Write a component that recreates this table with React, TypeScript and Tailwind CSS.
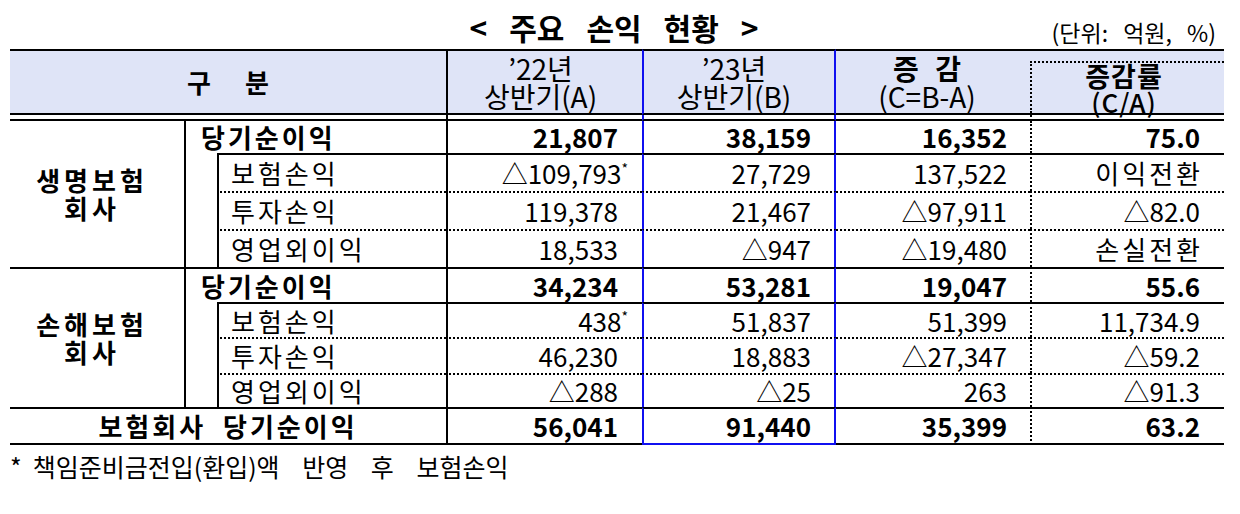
const BLUE = 'border-[#1010f0]';

type Row = [string, string, string, string, string];

const groups: { label: string[]; net: string[]; rows: Row[]; heights: number[] }[] = [
  {
    label: ['생명보험', '회사'],
    net: ['21,807', '38,159', '16,352', '75.0'],
    rows: [
      ['보험손익', '△109,793*', '27,729', '137,522', '이익전환'],
      ['투자손익', '119,378', '21,467', '△97,911', '△82.0'],
      ['영업외이익', '18,533', '△947', '△19,480', '손실전환'],
    ],
    heights: [32, 38, 38, 38],
  },
  {
    label: ['손해보험', '회사'],
    net: ['34,234', '53,281', '19,047', '55.6'],
    rows: [
      ['보험손익', '438*', '51,837', '51,399', '11,734.9'],
      ['투자손익', '46,230', '18,883', '△27,347', '△59.2'],
      ['영업외이익', '△288', '△25', '263', '△91.3'],
    ],
    heights: [35, 35, 36, 34],
  },
];

function Val({ v }: { v: string }) {
  if (v.endsWith('*')) {
    return (
      <>
        {v.slice(0, -1)}
        <span className="-mr-[10px] align-super text-[14px] leading-none">*</span>
      </>
    );
  }
  // hangul values (이익전환 / 손실전환) are set a little wider
  if (/[가-힣]/.test(v)) return <span className="tracking-[3px] -mr-[3px]">{v}</span>;
  return <>{v}</>;
}

// top: 'none' | 'solid' | 'dotted'
function NumCells({ vals, top, bold, bottom }: { vals: string[]; top: string; bold?: boolean; bottom?: boolean }) {
  const t = top === 'solid' ? 'border-t-2 border-t-black' : top === 'dotted' ? '[border-top:2px_dotted_#000]' : '';
  const b = bottom ? 'border-b-2 border-b-black' : '';
  const w = bold ? 'font-bold' : 'font-normal';
  return (
    <>
      <td className={`${t} ${b} ${w} border-l-2 border-l-black text-right pr-[24px]`}><Val v={vals[0]} /></td>
      <td className={`${t} ${w} border-x-2 ${BLUE} ${bottom ? 'border-b-2 border-b-[#1010f0]' : ''} ${top === 'solid' ? 'border-t-black' : ''} text-right pr-[23px]`}>
        <Val v={vals[1]} />
      </td>
      <td className={`${t} ${b} ${w} text-right pr-[23px]`}><Val v={vals[2]} /></td>
      <td className={`${t} ${b} ${w} [border-left:2px_dotted_#000] text-right pr-[24px]`}><Val v={vals[3]} /></td>
    </>
  );
}

export default function App() {
  return (
    <div className="w-[1240px] h-[514px] bg-white text-black font-['Noto_Sans_CJK_KR','Noto_Sans_CJK_JP',sans-serif]">
      <div className="ml-[10px] w-[1214px] h-[49px] grid grid-cols-[1fr_auto_1fr] items-end">
        <div />
        <h1 className="flex gap-[22px] text-[30px] font-bold leading-none pb-[7px] pr-[6px]">
          <span>&lt;</span>
          <span>주요</span>
          <span>손익</span>
          <span>현황</span>
          <span>&gt;</span>
        </h1>
        <div className="justify-self-end text-[23px] leading-none pb-[5px] pr-[8px] [word-spacing:10px]">(단위: 억원, %)</div>
      </div>

      <table className="ml-[10px] w-[1214px] table-fixed border-separate border-spacing-0 text-[26px] leading-none">
        <colgroup>
          <col className="w-[176px]" />
          <col className="w-[31px]" />
          <col className="w-[229px]" />
          <col className="w-[196px]" />
          <col className="w-[194px]" />
          <col className="w-[194px]" />
          <col className="w-[194px]" />
        </colgroup>
        <thead>
          <tr className="h-[66px] bg-[#dfe4f7] text-[28px] leading-[28px]">
            <th colSpan={3} className="border-y-2 border-black font-bold text-[26px]">
              <span className="pr-[34px]">구</span>분
            </th>
            <th className="border-y-2 border-l-2 border-black font-normal pr-[9px]">
              ’22년<br />상반기(A)
            </th>
            <th className={`border-y-2 border-y-black border-x-2 ${BLUE} font-normal pr-[10px]`}>
              ’23년<br />상반기(B)
            </th>
            <th className="border-y-2 border-black font-normal pr-[12px]">
              <span className="font-bold [word-spacing:10px]">증 감</span><br />(C=B-A)
            </th>
            <th className="border-y-2 border-black p-0 align-top">
              <div className="mt-[10px] h-[52px] pr-[8px] [border-top:2px_dotted_#000] [border-left:2px_dotted_#000] flex flex-col items-center justify-end text-[27px] leading-[26px]">
                <span className="font-bold tracking-[1px]">증감률</span>
                <span className="font-medium text-[26px] tracking-[1px] -mb-[2px]">(C/A)</span>
              </div>
            </th>
          </tr>
          <tr className="h-[6px]">
            <td colSpan={3} className="border-b-2 border-black" />
            <td className="border-b-2 border-l-2 border-black" />
            <td className={`border-b-2 border-b-black border-x-2 ${BLUE}`} />
            <td className="border-b-2 border-black" />
            <td className="border-b-2 border-b-black [border-left:2px_dotted_#000]" />
          </tr>
        </thead>
        <tbody>
          {groups.map((g, gi) => (
            <>
              <tr key={`n${gi}`} style={{ height: g.heights[0] }}>
                <td
                  rowSpan={4}
                  className={`border-r-2 border-black font-bold text-center pr-[10px] leading-[28px] tracking-[4px] ${gi > 0 ? 'border-t-2' : ''}`}
                >
                  {g.label[0]}
                  <br />
                  {g.label[1]}
                </td>
                <td colSpan={2} className={`font-bold pl-[15px] tracking-[3px] ${gi > 0 ? 'border-t-2 border-black' : ''}`}>
                  당기순이익
                </td>
                <NumCells vals={g.net} top={gi > 0 ? 'solid' : 'none'} bold />
              </tr>
              {g.rows.map((r, ri) => (
                <tr key={`r${gi}${ri}`} style={{ height: g.heights[ri + 1] }}>
                  {ri === 0 && <td rowSpan={3} />}
                  <td
                    className={`border-l-2 border-l-black pl-[12px] tracking-[3px] ${
                      ri === 0 ? 'border-t-2 border-t-black' : '[border-top:2px_dotted_#000]'
                    }`}
                  >
                    {r[0]}
                  </td>
                  <NumCells vals={r.slice(1)} top={ri === 0 ? 'solid' : 'dotted'} />
                </tr>
              ))}
            </>
          ))}
          <tr className="h-[38px]">
            <td colSpan={3} className="border-y-2 border-black font-bold text-center tracking-[3px] [word-spacing:8px]">
              보험회사 당기순이익
            </td>
            <NumCells vals={['56,041', '91,440', '35,399', '63.2']} top="solid" bold bottom />
          </tr>
        </tbody>
      </table>

      <p className="ml-[10px] mt-[9px] text-[25px] leading-none flex">
        <span className="mr-[11px]">*</span>
        <span className="[word-spacing:17px]">책임준비금전입(환입)액 반영 후 보험손익</span>
      </p>
    </div>
  );
}
